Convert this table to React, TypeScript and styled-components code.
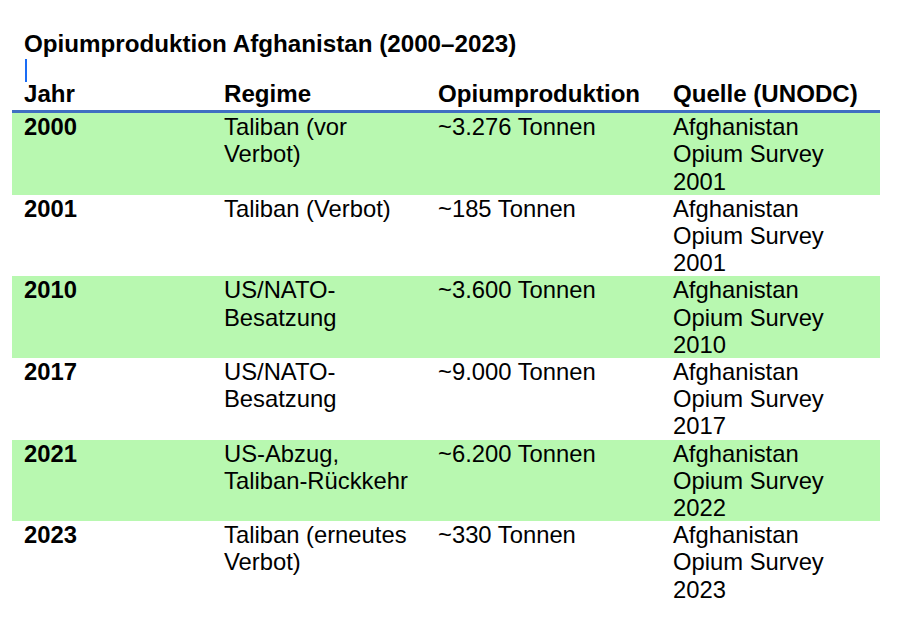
import React from "react";
import styled, { createGlobalStyle } from "styled-components";

const GlobalStyle = createGlobalStyle`
  html, body {
    margin: 0;
    padding: 0;
    background: #ffffff;
  }
  body {
    font-family: "Liberation Sans", Arial, Helvetica, sans-serif;
    color: #000000;
  }
`;

const Page = styled.div`
  width: 900px;
  height: 618px;
  box-sizing: border-box;
  padding: 30px 0 0 12px;
  overflow: hidden;
`;

const Title = styled.h1`
  margin: 0 0 0 12px;
  font-size: 24.2px;
  line-height: 27px;
  font-weight: 700;
`;

const CaretLine = styled.div`
  height: 21px;
  padding-left: 13px;
`;

const Caret = styled.span`
  display: block;
  width: 2px;
  height: 23px;
  margin-top: 2px;
  background: #1a6cf5;
`;

const Table = styled.table`
  width: 868px;
  table-layout: fixed;
  border-collapse: collapse;
  font-size: 23.8px;
  line-height: 27.2px;
`;

const HeadCell = styled.th`
  padding: 0 12px 3px;
  text-align: left;
  font-size: 24.1px;
  font-weight: 700;
  vertical-align: bottom;
  border-bottom: 3px solid #3f6fc2;
  white-space: nowrap;
`;

const Row = styled.tr<{ $shaded: boolean }>`
  background: ${(p) => (p.$shaded ? "#b8f8b0" : "transparent")};
`;

const Cell = styled.td<{ $bold?: boolean }>`
  padding: 0 12px;
  vertical-align: top;
  font-weight: ${(p) => (p.$bold ? 700 : 400)};
`;

const columns = [200, 214, 235, 219];

const rows = [
  { year: "2000", regime: "Taliban (vor Verbot)", amount: "~3.276 Tonnen", source: "Afghanistan Opium Survey 2001" },
  { year: "2001", regime: "Taliban (Verbot)", amount: "~185 Tonnen", source: "Afghanistan Opium Survey 2001" },
  { year: "2010", regime: "US/NATO-Besatzung", amount: "~3.600 Tonnen", source: "Afghanistan Opium Survey 2010" },
  { year: "2017", regime: "US/NATO-Besatzung", amount: "~9.000 Tonnen", source: "Afghanistan Opium Survey 2017" },
  { year: "2021", regime: "US-Abzug, Taliban-Rückkehr", amount: "~6.200 Tonnen", source: "Afghanistan Opium Survey 2022" },
  { year: "2023", regime: "Taliban (erneutes Verbot)", amount: "~330 Tonnen", source: "Afghanistan Opium Survey 2023" },
];

export default function App() {
  return (
    <>
      <GlobalStyle />
      <Page>
        <Title>Opiumproduktion Afghanistan (2000–2023)</Title>
        <CaretLine>
          <Caret />
        </CaretLine>
        <Table>
          <colgroup>
            {columns.map((w, i) => (
              <col key={i} style={{ width: w }} />
            ))}
          </colgroup>
          <thead>
            <tr>
              <HeadCell>Jahr</HeadCell>
              <HeadCell>Regime</HeadCell>
              <HeadCell>Opiumproduktion</HeadCell>
              <HeadCell>Quelle (UNODC)</HeadCell>
            </tr>
          </thead>
          <tbody>
            {rows.map((r, i) => (
              <Row key={r.year} $shaded={i % 2 === 0}>
                <Cell $bold>{r.year}</Cell>
                <Cell>{r.regime}</Cell>
                <Cell>{r.amount}</Cell>
                <Cell>{r.source}</Cell>
              </Row>
            ))}
          </tbody>
        </Table>
      </Page>
    </>
  );
}
